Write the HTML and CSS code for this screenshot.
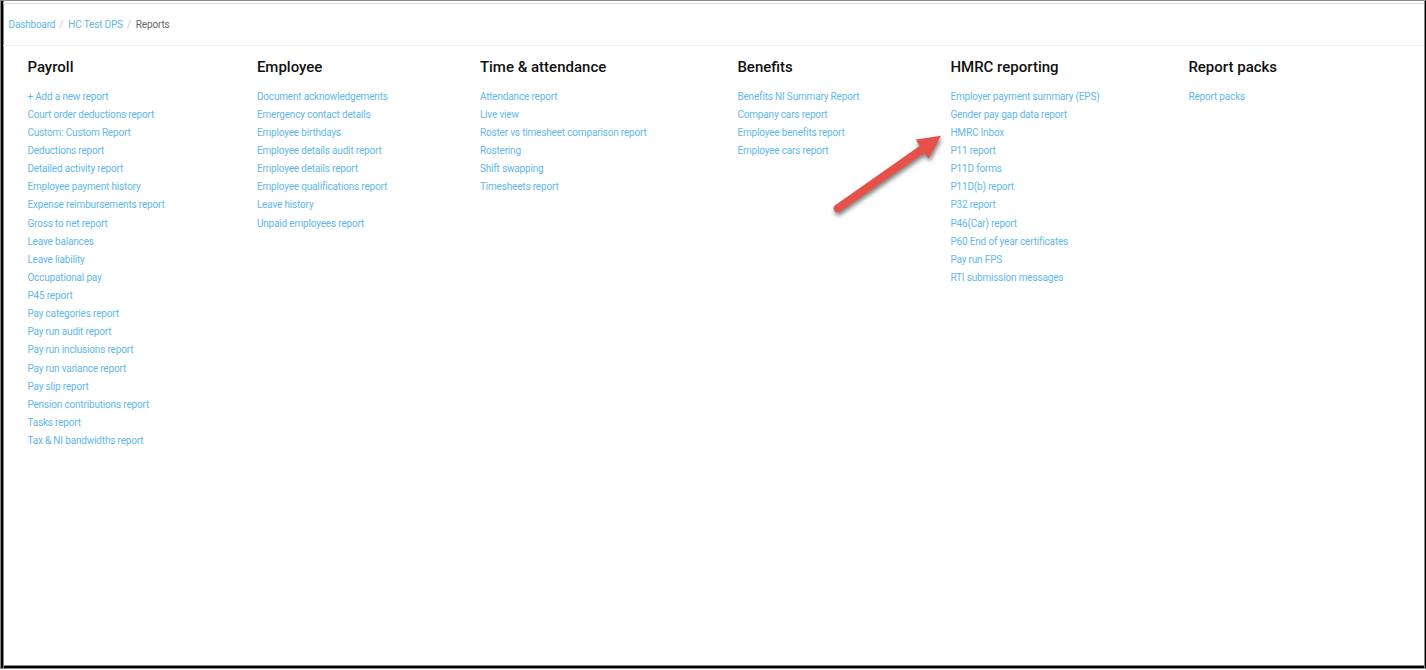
FILE: index.html
```html
<!DOCTYPE html>
<html lang="en">
<head>
    <meta charset="UTF-8">
    <meta name="viewport" content="width=device-width, initial-scale=1.0">
    <title>Reports</title>
    <link rel="stylesheet" href="styles.css">
</head>
<body>
    <div class="page">
        <nav class="breadcrumb">
            <a href="#">Dashboard</a>
            <span class="divider">/</span>
            <a href="#">HC Test DPS</a>
            <span class="divider">/</span>
            <span class="current">Reports</span>
        </nav>

        <main class="reports">
            <section class="report_group">
                <h2>Payroll</h2>
                <ul>
                    <li><a href="#">+ Add a new report</a></li>
                    <li><a href="#">Court order deductions report</a></li>
                    <li><a href="#">Custom: Custom Report</a></li>
                    <li><a href="#">Deductions report</a></li>
                    <li><a href="#">Detailed activity report</a></li>
                    <li><a href="#">Employee payment history</a></li>
                    <li><a href="#">Expense reimbursements report</a></li>
                    <li><a href="#">Gross to net report</a></li>
                    <li><a href="#">Leave balances</a></li>
                    <li><a href="#">Leave liability</a></li>
                    <li><a href="#">Occupational pay</a></li>
                    <li><a href="#">P45 report</a></li>
                    <li><a href="#">Pay categories report</a></li>
                    <li><a href="#">Pay run audit report</a></li>
                    <li><a href="#">Pay run inclusions report</a></li>
                    <li><a href="#">Pay run variance report</a></li>
                    <li><a href="#">Pay slip report</a></li>
                    <li><a href="#">Pension contributions report</a></li>
                    <li><a href="#">Tasks report</a></li>
                    <li><a href="#">Tax &amp; NI bandwidths report</a></li>
                </ul>
            </section>

            <section class="report_group">
                <h2>Employee</h2>
                <ul>
                    <li><a href="#">Document acknowledgements</a></li>
                    <li><a href="#">Emergency contact details</a></li>
                    <li><a href="#">Employee birthdays</a></li>
                    <li><a href="#">Employee details audit report</a></li>
                    <li><a href="#">Employee details report</a></li>
                    <li><a href="#">Employee qualifications report</a></li>
                    <li><a href="#">Leave history</a></li>
                    <li><a href="#">Unpaid employees report</a></li>
                </ul>
            </section>

            <section class="report_group">
                <h2>Time &amp; attendance</h2>
                <ul>
                    <li><a href="#">Attendance report</a></li>
                    <li><a href="#">Live view</a></li>
                    <li><a href="#">Roster vs timesheet comparison report</a></li>
                    <li><a href="#">Rostering</a></li>
                    <li><a href="#">Shift swapping</a></li>
                    <li><a href="#">Timesheets report</a></li>
                </ul>
            </section>

            <section class="report_group">
                <h2>Benefits</h2>
                <ul>
                    <li><a href="#">Benefits NI Summary Report</a></li>
                    <li><a href="#">Company cars report</a></li>
                    <li><a href="#">Employee benefits report</a></li>
                    <li><a href="#">Employee cars report</a></li>
                </ul>
            </section>

            <section class="report_group">
                <h2>HMRC reporting</h2>
                <ul>
                    <li><a href="#">Employer payment summary (EPS)</a></li>
                    <li><a href="#">Gender pay gap data report</a></li>
                    <li><a href="#">HMRC Inbox</a></li>
                    <li><a href="#">P11 report</a></li>
                    <li><a href="#">P11D forms</a></li>
                    <li><a href="#">P11D(b) report</a></li>
                    <li><a href="#">P32 report</a></li>
                    <li><a href="#">P46(Car) report</a></li>
                    <li><a href="#">P60 End of year certificates</a></li>
                    <li><a href="#">Pay run FPS</a></li>
                    <li><a href="#">RTI submission messages</a></li>
                </ul>
            </section>

            <section class="report_group">
                <h2>Report packs</h2>
                <ul>
                    <li><a href="#">Report packs</a></li>
                </ul>
            </section>
        </main>

        <!-- Arrow pointing at HMRC Inbox -->
        <svg class="arrow" width="130" height="100" viewBox="0 0 130 100">
            <path d="M14.8 85.5 L99.5 26 L95.8 19.6 L121 15.7 L108.7 38.5 L104 33 L19.4 92.1 A4.1 4.1 0 0 1 14.8 85.5 Z" fill="#e8514a"/>
        </svg>
    </div>
</body>
</html>
```

FILE: styles.css
```css
body {
    margin: 0;
    font-family: Roboto, Arial, sans-serif;
    font-size: 10px;
    letter-spacing: -0.17px;
    background-color: #fff;
}

.page {
    position: relative;
    box-sizing: border-box;
    width: 1426px;
    height: 669px;
    padding: 2px 0 0 3px;
    border-top: 1px solid #888;
    border-bottom: 1px solid #888;
    box-shadow: inset 1px 0 #888, inset 3px 0 #000, inset 4px 0 #888, inset -1px 0 #000, inset -2px 0 #888, inset 0 -2px #000, inset 0 -3px #888;
    overflow: hidden;
}

a {
    color: #62b8ea;
    text-decoration: none;
}

a:hover {
    text-decoration: underline;
}

.breadcrumb {
    display: flex;
    align-items: center;
    box-sizing: border-box;
    height: 43px;
    margin-right: 2px;
    padding-left: 5.5px;
    border-top: 1px solid #dedee0;
    border-bottom: 1px solid #f2f2f2;
    white-space: nowrap;
}

.divider {
    margin: 0 5px 0 4px;
    color: #ccc;
}

.current {
    color: #666;
}

.reports {
    display: grid;
    grid-template-columns: 229.5px 223px 257.5px 213px 238px 1fr;
    padding: 13px 0 0 24.4px;
}

.report_group h2 {
    margin: 0 0 11.7px;
    font-size: 15px;
    font-weight: 500;
    line-height: 17px;
    letter-spacing: 0;
    color: #111;
    white-space: nowrap;
}

.report_group ul {
    margin: 0;
    padding: 0;
    list-style: none;
}

.report_group li {
    line-height: 18.12px;
    white-space: nowrap;
}

.arrow {
    position: absolute;
    top: 119px;
    left: 820px;
    filter: drop-shadow(1px 3px 2px rgba(0, 0, 0, 0.5));
}
```
